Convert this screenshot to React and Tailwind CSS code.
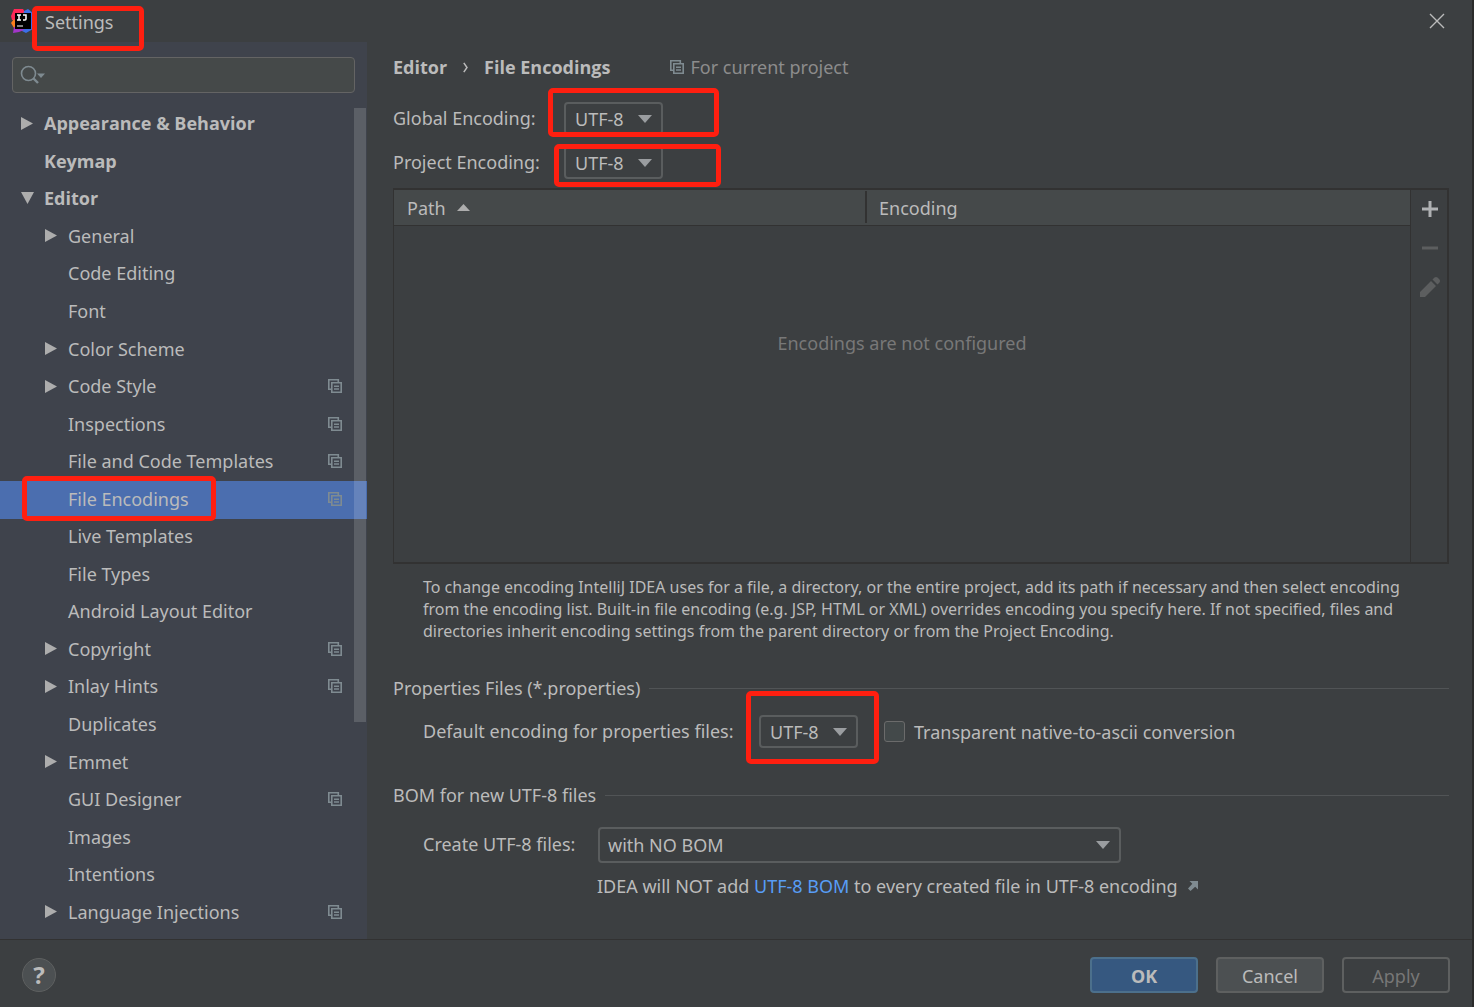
const CATEGORIES = [
    { name: 'Appearance & Behavior', level: 0, arrow: 'right' },
    { name: 'Keymap', level: 0 },
    { name: 'Editor', level: 0, arrow: 'down' },
    { name: 'General', level: 1, arrow: 'right' },
    { name: 'Code Editing', level: 1 },
    { name: 'Font', level: 1 },
    { name: 'Color Scheme', level: 1, arrow: 'right' },
    { name: 'Code Style', level: 1, arrow: 'right', project: true },
    { name: 'Inspections', level: 1, project: true },
    { name: 'File and Code Templates', level: 1, project: true },
    { name: 'File Encodings', level: 1, project: true, selected: true },
    { name: 'Live Templates', level: 1 },
    { name: 'File Types', level: 1 },
    { name: 'Android Layout Editor', level: 1 },
    { name: 'Copyright', level: 1, arrow: 'right', project: true },
    { name: 'Inlay Hints', level: 1, arrow: 'right', project: true },
    { name: 'Duplicates', level: 1 },
    { name: 'Emmet', level: 1, arrow: 'right' },
    { name: 'GUI Designer', level: 1, project: true },
    { name: 'Images', level: 1 },
    { name: 'Intentions', level: 1 },
    { name: 'Language Injections', level: 1, arrow: 'right', project: true },
];

const Logo = () => (
    <svg width="22" height="24" viewBox="0 0 22 24" className="shrink-0" aria-hidden="true">
        <path d="M3 0h9l3 5-5 6H1L0 7z" fill="#fe2857" />
        <path d="M13 2l4-2 5 4v16l-7 4-6-3z" fill="#3b6fe8" />
        <path d="M0 14l3-4 4 6-4 3z" fill="#fc801d" />
        <path d="M3 18h8l2 3-5 2-6 1z" fill="#a236c9" />
        <rect x="4" y="4" width="16" height="16" fill="#000" />
        <path d="M6 6h4M8 6v5M6 11h4M12 6h3v4q0 1-1 1h-2" stroke="#fff" strokeWidth="1.5" fill="none" />
        <path d="M6 17h6" stroke="#fff" strokeWidth="1" />
    </svg>
);

const ProjectIcon = () => (
    <svg width="14" height="14" viewBox="0 0 14 14" className="shrink-0 text-[#7f8b91]" fill="none" stroke="currentColor" aria-hidden="true">
        <path d="M3.500 10.300H.8V.8h9.500V3.500" strokeWidth="1.600" />
        <path d="M3.800 3.800h9.400v9.400H3.800z" strokeWidth="1.600" />
        <path d="M6 7.200h5M6 10h5" strokeWidth="1.400" />
    </svg>
);

const TreeArrow = ({ direction }) => (
    <svg width="13" height="13" viewBox="0 0 13 13" fill="#adadad" aria-hidden="true">
        {direction === 'right' && <path d="M0 0l12 6.5L0 13z" />}
        {direction === 'down' && <path d="M0 0h13L6.5 12z" />}
    </svg>
);

const Highlight = ({ className }) => (
    <span className={`pointer-events-none absolute z-10 rounded-[5px] border-5 border-[#ff1f10] ${className}`} />
);

const Combo = ({ id, value, className, selectClass }) => (
    <div className={`relative ${className}`}>
        <select
            id={id}
            defaultValue={value}
            className={`w-full appearance-none rounded border-2 border-[#5a5d5e] bg-transparent text-[#bbbbbb] outline-none ${selectClass}`}
        >
            <option>{value}</option>
        </select>
        <svg width="14" height="8" viewBox="0 0 14 8" className="pointer-events-none absolute top-1/2 right-[11px] -translate-y-1/2" fill="#9a9da0" aria-hidden="true">
            <path d="M0 0h14L7 8z" />
        </svg>
    </div>
);

const CategoryRow = ({ item }) => (
    <li className={`flex flex-1 items-stretch ${item.selected ? 'bg-[#4b6eaf]' : ''}`}>
        <a
            href="#"
            className={`flex flex-1 items-center pr-[25px] pb-[3px] ${item.level === 0 ? "pl-[21px] font-['Open_Sans',sans-serif] font-bold" : 'pl-[45px]'}`}
        >
            <span className="w-[23px] shrink-0">
                <TreeArrow direction={item.arrow} />
            </span>
            <span className="relative flex-1 whitespace-nowrap">
                {item.name}
                {item.selected && <Highlight className="-left-[46px] -top-[10px] h-[45px] w-[194px]" />}
            </span>
            {item.project && <ProjectIcon />}
        </a>
    </li>
);

const Sidebar = () => (
    <aside className="flex w-[367px] shrink-0 flex-col bg-[#3f434c] pt-[15px] pb-[7px]">
        <div className="relative mr-3 ml-3">
            <input
                type="text"
                aria-label="Search settings"
                className="block h-9 w-full rounded border border-[#646464] bg-[#454949] pl-10 text-[#bbbbbb] outline-none"
            />
            <svg width="26" height="20" viewBox="0 0 26 20" className="pointer-events-none absolute top-2 left-2" fill="none" stroke="#7f8b91" aria-hidden="true">
                <circle cx="8.500" cy="8.500" r="7" strokeWidth="1.600" />
                <path d="M13.500 13.500l4.500 4.500" strokeWidth="2.400" />
                <path d="M17 8.500h8l-4 4.500z" fill="#7f8b91" stroke="none" />
            </svg>
        </div>
        <nav className="relative mt-[13px] flex flex-1 flex-col">
            <ul className="flex flex-1 flex-col">
                {CATEGORIES.map((item) => (
                    <CategoryRow key={item.name} item={item} />
                ))}
            </ul>
            <span className="absolute top-[2px] right-[1px] h-[614px] w-3 bg-white/15" />
        </nav>
    </aside>
);

const EncodingTable = () => (
    <div className="mt-[9px] flex min-h-[240px] flex-1 border-2 border-l border-[#323232]">
        <table className="flex-1 border-collapse">
            <thead>
                <tr className="h-[35px] border-b border-[#323232] bg-[#45494a] text-left">
                    <th className="w-[473px] p-0 font-normal">
                        <div className="flex h-8 items-center gap-[11px] border-r-2 border-[#323232] pt-[1px] pl-[13px]">
                            Path
                            <svg width="13" height="7" viewBox="0 0 13 7" fill="#adadad" aria-hidden="true">
                                <path d="M0 7L6.500 0 13 7z" />
                            </svg>
                        </div>
                    </th>
                    <th className="p-0 pt-[1px] pl-3 font-normal">Encoding</th>
                </tr>
            </thead>
            <tbody>
                <tr>
                    <td colSpan={2} className="pt-[104px] pb-0 text-center align-top text-[#787878]">
                        Encodings are not configured
                    </td>
                </tr>
            </tbody>
        </table>
        <div className="flex w-[37px] flex-col items-center gap-[15px] border-l border-[#323232] pt-[7px] pl-[2px]">
            <button type="button" aria-label="Add" className="flex h-6 w-6 items-center justify-center">
                <svg width="16" height="16" viewBox="0 0 16 16" stroke="#afb1b3" strokeWidth="3">
                    <path d="M8 0v16M0 8h16" />
                </svg>
            </button>
            <button type="button" aria-label="Remove" disabled className="flex h-6 w-6 items-center justify-center">
                <svg width="16" height="16" viewBox="0 0 16 16" stroke="#5c5e5f" strokeWidth="3">
                    <path d="M0 8h16" />
                </svg>
            </button>
            <button type="button" aria-label="Edit" disabled className="flex h-6 w-6 items-center justify-center">
                <svg width="20" height="20" viewBox="0 0 20 20" fill="#5c5e5f">
                    <path d="M0 15L11 4l5 5L5 20H0zM12.500 2.500L14.500.500q1.500-1 3 0L19.500 2.500q1 1.500 0 3L17.500 7.500z" />
                </svg>
            </button>
        </div>
    </div>
);

const SectionTitle = ({ children, className }) => (
    <h2 className={`flex h-[26px] items-center gap-[9px] ${className}`}>
        {children}
        <span className="h-px flex-1 bg-[#515456]" />
    </h2>
);

const Content = () => (
    <main className="flex min-w-0 flex-1 flex-col pt-3 pr-[23px] pb-10 pl-[26px]">
        <div className="flex h-[26px] items-center">
            <h1 className="flex items-center gap-4 font-['Open_Sans',sans-serif] font-bold">
                Editor
                <svg width="5" height="11" viewBox="0 0 5 11" fill="none" stroke="#bbbbbb" strokeWidth="1.500" aria-hidden="true">
                    <path d="M.8.800L4 5.500.800 10.200" />
                </svg>
                File Encodings
            </h1>
            <span className="ml-[60px] flex items-center gap-[6px] text-[#8c8c8c]">
                <ProjectIcon />
                For current project
            </span>
        </div>

        <div className="mt-[22px] flex h-[33px] items-center">
            <label htmlFor="global-encoding" className="w-[171px] pb-[2px]">Global Encoding:</label>
            <div className="relative">
                <Combo id="global-encoding" value="UTF-8" className="w-[99px]" selectClass="h-[33px] pl-[9px]" />
                <Highlight className="-top-[14px] -left-[16px] h-[49px] w-[171px]" />
            </div>
        </div>
        <div className="mt-[11px] flex h-[33px] items-center">
            <label htmlFor="project-encoding" className="w-[171px] pb-[2px]">Project Encoding:</label>
            <div className="relative">
                <Combo id="project-encoding" value="UTF-8" className="w-[99px]" selectClass="h-[33px] pl-[9px]" />
                <Highlight className="-top-[2px] -left-[10px] h-[43px] w-[167px]" />
            </div>
        </div>

        <EncodingTable />

        <p className="mt-3 pr-3 pl-[30px] text-[16px] leading-[22px]">
            To change encoding IntelliJ IDEA uses for a file, a directory, or the entire project, add its path if necessary and then select encoding from the encoding list. Built-in file encoding (e.g. JSP, HTML or XML) overrides encoding you specify here. If not specified, files and directories inherit encoding settings from the parent directory or from the Project Encoding.
        </p>

        <SectionTitle className="mt-[33px]">Properties Files (*.properties)</SectionTitle>
        <div className="mt-[14px] flex items-center pl-[30px]">
            <label htmlFor="properties-encoding" className="w-[336px] pb-[2px]">Default encoding for properties files:</label>
            <div className="relative">
                <Combo id="properties-encoding" value="UTF-8" className="w-[99px]" selectClass="h-[33px] pl-[9px]" />
                <Highlight className="-top-[24px] -left-[13px] h-[73px] w-[133px]" />
            </div>
            <label className="ml-[26px] flex items-center gap-[9px]">
                <input type="checkbox" className="h-[21px] w-[21px] appearance-none rounded-[3px] border border-[#6b6b6b] bg-[#43494a]" />
                Transparent native-to-ascii conversion
            </label>
        </div>

        <SectionTitle className="mt-[34px]">BOM for new UTF-8 files</SectionTitle>
        <div className="mt-[19px] flex items-center pl-[30px]">
            <label htmlFor="bom" className="w-[175px] pb-[2px]">Create UTF-8 files:</label>
            <Combo id="bom" value="with NO BOM" className="w-[523px]" selectClass="h-9 pl-2" />
        </div>
        <p className="mt-[10px] flex h-[26px] items-center gap-[10px] pl-[204px]">
            <span>
                IDEA will NOT add <a href="#" className="text-[#589df6]">UTF-8 BOM</a> to every created file in UTF-8 encoding
            </span>
            <svg width="10" height="10" viewBox="0 0 10 10" aria-hidden="true">
                <path d="M1.500 0H10v8.500L7.200 5.700 2.500 10 0 7.500 4.300 2.800z" fill="#7f8b91" />
            </svg>
        </p>
    </main>
);

const App = () => {
    return (
        <div className="flex min-h-screen flex-col border-r-2 border-[#2b2b2b] bg-[#3c3f41] font-['Noto_Sans',sans-serif] text-[18px] leading-[26px] text-[#bbbbbb]">
            <header className="flex h-[42px] shrink-0 items-center justify-between pr-[27px] pl-[11px]">
                <div className="flex items-center gap-3">
                    <Logo />
                    <span className="relative pt-[2px]">
                        Settings
                        <Highlight className="-top-[1px] -left-[13px] h-[45px] w-[112px]" />
                    </span>
                </div>
                <button type="button" aria-label="Close">
                    <svg width="16" height="16" viewBox="0 0 16 16" stroke="#bbbbbb" strokeWidth="1.400">
                        <path d="M1 1l14 14M15 1L1 15" />
                    </svg>
                </button>
            </header>

            <div className="flex flex-1">
                <Sidebar />
                <Content />
            </div>

            <footer className="flex h-[68px] shrink-0 items-center border-t border-[#323232] pt-[3px] pr-[22px] pl-[22px]">
                <button
                    type="button"
                    aria-label="Help"
                    className="flex h-[34px] w-[34px] items-center justify-center rounded-full border border-[#5e6060] bg-[#4c5052] text-[24px] font-bold"
                >
                    ?
                </button>
                <div className="ml-auto flex gap-[18px]">
                    <button type="button" className="h-9 w-[108px] rounded border-2 border-[#4c708c] bg-[#365880] pt-[1px] font-bold">OK</button>
                    <button type="button" className="h-9 w-[108px] rounded border-2 border-[#5e6060] bg-[#4c5052] pt-[1px]">Cancel</button>
                    <button type="button" disabled className="h-9 w-[108px] rounded border-2 border-[#5e6060] pt-[1px] text-[#777777]">Apply</button>
                </div>
            </footer>
        </div>
    );
};

export default App;
